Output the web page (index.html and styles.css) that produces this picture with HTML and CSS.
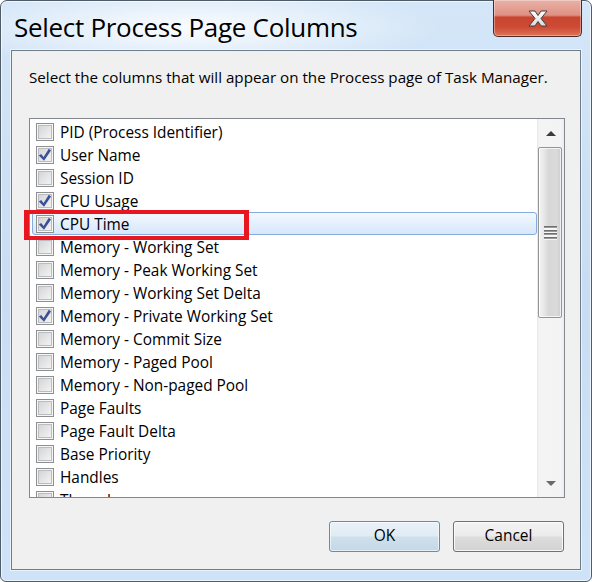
FILE: index.html
```html
<!DOCTYPE html>
<html>
<head>
<meta charset="utf-8">
<link rel="stylesheet" href="styles.css">
</head>
<body>
<div class="window">
  <div class="titlebar">
    <h1 class="title">Select Process Page Columns</h1>
    <div class="close">
      <svg width="20" height="17" viewBox="-1 -1 20 17">
        <defs><linearGradient id="xg" x1="0" y1="0" x2="0" y2="1"><stop offset="0" stop-color="#ffffff"/><stop offset="1" stop-color="#d9d9d9"/></linearGradient></defs>
        <path d="M0,0 H6 L9,4.5 L12,0 H18 L12,7.5 L18,15 H12 L9,10.5 L6,15 H0 L6,7.5 Z" fill="url(#xg)" stroke="#3f3f3f" stroke-width="1" stroke-linejoin="round"/>
      </svg>
    </div>
  </div>
  <div class="client">
    <p class="desc">Select the columns that will appear on the Process page of Task Manager.</p>
    <div class="listbox">
      <div class="items">
        <div class="row"><span class="cb"></span><span class="label">PID (Process Identifier)</span></div>
        <div class="row"><span class="cb checked"><svg width="16" height="16" viewBox="0 0 16 16"><path d="M1.8,8.6 L4.2,7 L6.6,10 L11.8,1.8 L14,3.4 L7,13.8 Z" fill="#3c5098"/></svg></span><span class="label">User Name</span></div>
        <div class="row"><span class="cb"></span><span class="label">Session ID</span></div>
        <div class="row"><span class="cb checked"><svg width="16" height="16" viewBox="0 0 16 16"><path d="M1.8,8.6 L4.2,7 L6.6,10 L11.8,1.8 L14,3.4 L7,13.8 Z" fill="#3c5098"/></svg></span><span class="label">CPU Usage</span></div>
        <div class="row selected"><span class="cb checked"><svg width="16" height="16" viewBox="0 0 16 16"><path d="M1.8,8.6 L4.2,7 L6.6,10 L11.8,1.8 L14,3.4 L7,13.8 Z" fill="#3c5098"/></svg></span><span class="label">CPU Time</span></div>
        <div class="row"><span class="cb"></span><span class="label">Memory - Working Set</span></div>
        <div class="row"><span class="cb"></span><span class="label">Memory - Peak Working Set</span></div>
        <div class="row"><span class="cb"></span><span class="label">Memory - Working Set Delta</span></div>
        <div class="row"><span class="cb checked"><svg width="16" height="16" viewBox="0 0 16 16"><path d="M1.8,8.6 L4.2,7 L6.6,10 L11.8,1.8 L14,3.4 L7,13.8 Z" fill="#3c5098"/></svg></span><span class="label">Memory - Private Working Set</span></div>
        <div class="row"><span class="cb"></span><span class="label">Memory - Commit Size</span></div>
        <div class="row"><span class="cb"></span><span class="label">Memory - Paged Pool</span></div>
        <div class="row"><span class="cb"></span><span class="label">Memory - Non-paged Pool</span></div>
        <div class="row"><span class="cb"></span><span class="label">Page Faults</span></div>
        <div class="row"><span class="cb"></span><span class="label">Page Fault Delta</span></div>
        <div class="row"><span class="cb"></span><span class="label">Base Priority</span></div>
        <div class="row"><span class="cb"></span><span class="label">Handles</span></div>
        <div class="row"><span class="cb"></span><span class="label">Threads</span></div>
      </div>
      <div class="scrollbar">
        <div class="sb-btn"><span class="arrow-up"></span></div>
        <div class="thumb"><span class="grip"></span></div>
        <div class="track"></div>
        <div class="sb-btn"><span class="arrow-down"></span></div>
      </div>
    </div>
    <div class="buttons">
      <button class="btn default">OK</button>
      <button class="btn">Cancel</button>
    </div>
    <div class="annotation"></div>
  </div>
</div>
</body>
</html>
```
FILE: styles.css
```css
html, body {
  margin: 0;
  padding: 0;
}
body {
  width: 592px;
  height: 582px;
  overflow: hidden;
  background: #ffffff;
  font-family: "Open Sans", "Noto Sans", "DejaVu Sans", sans-serif;
  color: #000;
}
.window {
  box-sizing: border-box;
  width: 592px;
  height: 582px;
  border: 1px solid #4f5b67;
  border-radius: 7px 7px 6px 6px;
  padding: 0 10px 11px 10px;
  display: flex;
  flex-direction: column;
  background:
    radial-gradient(ellipse 250px 42px at 190px 27px, rgba(255,255,255,0.9), rgba(255,255,255,0) 100%),
    linear-gradient(to bottom, #d4e6f8 0%, #c8ddf3 50%, #cfe3f8 100%);
  box-shadow: inset 0 0 0 1px rgba(255,255,255,0.65);
}
.titlebar {
  height: 49px;
  flex: none;
  display: flex;
  justify-content: space-between;
  align-items: flex-start;
}
.title {
  margin: 0;
  padding: 11px 0 0 3px;
  font-size: 26px;
  line-height: 30px;
  font-weight: 400;
  color: #000;
  letter-spacing: -0.3px;
}
.close {
  box-sizing: border-box;
  width: 89px;
  height: 37px;
  margin: -1px -1px 0 0;
  border: 1px solid #4d2a26;
  border-top: none;
  border-radius: 0 0 5px 5px;
  background: linear-gradient(to bottom, #eab1a6 0%, #de9184 42%, #c8452f 48%, #cc4b34 75%, #de7358 100%);
  box-shadow: inset 0 0 0 1px rgba(255,255,255,0.35);
  display: flex;
  align-items: center;
  justify-content: center;
  padding-top: 1px;
}
.client {
  position: relative;
  flex: 1;
  border: 1px solid #6f7c89;
  background: #f0f0f0;
  padding: 16px 15px 17px 17px;
  display: flex;
  flex-direction: column;
  box-shadow: 0 0 0 1px rgba(255,255,255,0.55);
}
.desc {
  margin: 0;
  font-size: 15.2px;
  line-height: 20px;
}
.listbox {
  margin-top: 31px;
  height: 380px;
  box-sizing: border-box;
  border: 1px solid #828790;
  background: #fff;
  display: flex;
}
.items {
  flex: 1;
  overflow: hidden;
  padding-top: 1px;
}
.row {
  box-sizing: border-box;
  height: 23px;
  display: flex;
  align-items: center;
  padding-left: 6px;
  gap: 6px;
  font-size: 15.4px;
  white-space: nowrap;
}
.row.selected {
  margin-left: 2px;
  padding-left: 3px;
  border: 1px solid #84acdd;
  border-radius: 3px;
  background: linear-gradient(to bottom, #f3f8fe, #d7e7fb);
}
.cb {
  box-sizing: border-box;
  width: 18px;
  height: 18px;
  flex: none;
  border: 1px solid #8f8f8f;
  background: linear-gradient(135deg, #cfd0d2 0%, #e6e6e6 55%, #f7f7f7 100%);
  box-shadow: inset 0 0 0 1px #f6f6f6, inset 0 0 0 2px #b9bcc0;
  display: flex;
  align-items: center;
  justify-content: center;
}
.cb svg {
  display: block;
}
.label {
  line-height: 20px;
  padding-top: 2px;
}
.scrollbar {
  width: 27px;
  flex: none;
  display: flex;
  flex-direction: column;
  background: linear-gradient(to right, #e6e6e6 0, #f4f4f4 2px, #f3f3f3 24px, #ececec 27px);
}
.sb-btn {
  height: 28px;
  flex: none;
  display: flex;
  align-items: center;
  justify-content: center;
  padding-left: 1px;
}
.arrow-up {
  width: 0;
  height: 0;
  border-left: 5px solid transparent;
  border-right: 5px solid transparent;
  border-bottom: 5px solid #3a3a3a;
}
.arrow-down {
  width: 0;
  height: 0;
  border-left: 5px solid transparent;
  border-right: 5px solid transparent;
  border-top: 5px solid #6a6a6a;
}
.thumb {
  box-sizing: border-box;
  height: 171px;
  margin: 0 2px 0 1px;
  border: 1px solid #959595;
  border-radius: 2px;
  background: linear-gradient(to right, #f4f4f4 0%, #e5e5e5 25%, #d7d7d7 45%, #dadada 80%, #cdcdcd 100%);
  box-shadow: inset 0 0 0 1px rgba(255,255,255,0.7);
  display: flex;
  align-items: center;
  justify-content: center;
}
.grip {
  width: 13px;
  height: 14px;
  margin-left: 1px;
  background: repeating-linear-gradient(to bottom, #6f6f6f 0, #6f6f6f 1px, #9a9a9a 1px, #9a9a9a 2px, #f6f6f6 2px, #f6f6f6 3.5px);
}
.track {
  flex: 1;
}
.buttons {
  margin-top: 23px;
  display: flex;
  justify-content: flex-end;
  gap: 13px;
  padding-right: 1px;
}
.btn {
  box-sizing: border-box;
  width: 111px;
  height: 31px;
  margin: 0;
  padding: 0 0 3px 0;
  border: 1px solid #707070;
  border-radius: 3px;
  background: linear-gradient(to bottom, #f3f3f3 0%, #ebebeb 48%, #dddddd 52%, #d2d2d2 100%);
  box-shadow: inset 0 0 0 1px rgba(255,255,255,0.8);
  font-family: "Open Sans", "Noto Sans", "DejaVu Sans", sans-serif;
  font-size: 15.5px;
  color: #000;
}
.btn.default {
  border-color: #3c9ad2;
  background: linear-gradient(to bottom, #e9f2f9 0%, #e0ebf3 48%, #cfe0eb 52%, #c3d8e6 100%);
  box-shadow: inset 0 0 0 1px rgba(255,255,255,0.6);
}
.annotation {
  position: absolute;
  left: 12px;
  top: 159px;
  width: 225px;
  height: 30px;
  box-sizing: border-box;
  border: 4px solid #e8171f;
  border-left-width: 5px;
  border-right-width: 5px;
}
```
